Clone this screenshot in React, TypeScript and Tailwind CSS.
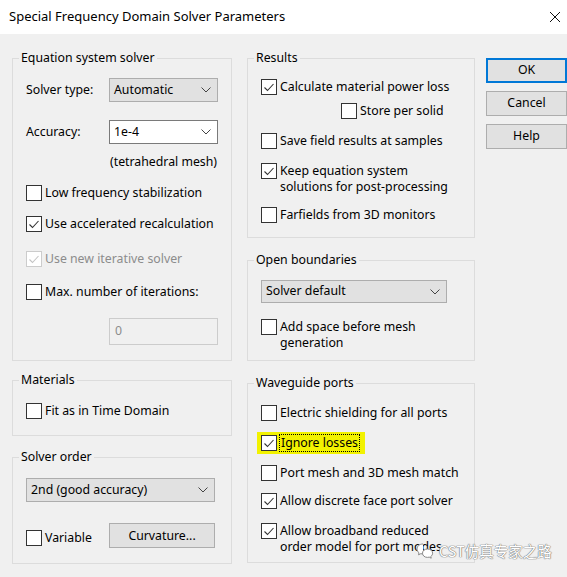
import React from "react";

const font = { fontFamily: '"Noto Sans", "Liberation Sans", sans-serif' };

function Check({ checked, disabled }: { checked?: boolean; disabled?: boolean }) {
  return (
    <span
      className={
        "w-4 h-4 shrink-0 border bg-white flex items-center justify-center " +
        (disabled ? "border-[#cccccc]" : "border-[#333333]")
      }
    >
      {checked && (
        <svg width="14" height="14" viewBox="0 0 14 14">
          <path
            d="M2.5 7.5 L5.5 10.5 L11.5 4"
            fill="none"
            stroke={disabled ? "#c4c4c4" : "#333333"}
            strokeWidth="1.1"
          />
        </svg>
      )}
    </span>
  );
}

function CB({
  label,
  checked,
  disabled,
  className = "",
}: {
  label: React.ReactNode;
  checked?: boolean;
  disabled?: boolean;
  className?: string;
}) {
  return (
    <div className={"flex items-start gap-[3px] leading-4 whitespace-nowrap " + className}>
      <Check checked={checked} disabled={disabled} />
      <span className={disabled ? "text-[#8c8c8c]" : "text-black"}>{label}</span>
    </div>
  );
}

function Chevron() {
  return (
    <svg width="10" height="6" viewBox="0 0 10 6" className="shrink-0">
      <path d="M0.5 0.5 L5 5 L9.5 0.5" fill="none" stroke="#444" strokeWidth="1" />
    </svg>
  );
}

function Select({ value, white, className = "" }: { value: string; white?: boolean; className?: string }) {
  return (
    <div
      className={
        "flex items-center justify-between pl-[4px] pr-[6px] border whitespace-nowrap " +
        (white ? "bg-white border-[#7a7a7a]" : "bg-[#e1e1e1] border-[#adadad]") +
        " " +
        className
      }
    >
      <span>{value}</span>
      <Chevron />
    </div>
  );
}

function Group({
  title,
  children,
  className = "",
  inner = "",
}: {
  title: string;
  children: React.ReactNode;
  className?: string;
  inner?: string;
}) {
  return (
    <fieldset className={"border border-[#dcdcdc] p-0 m-0 min-w-0 " + className}>
      <legend className="ml-[6px] px-[2px] leading-[18px] whitespace-nowrap">{title}</legend>
      <div className={"flex flex-col " + inner}>{children}</div>
    </fieldset>
  );
}

export default function App() {
  return (
    <div className="w-[567px] h-[577px] flex flex-col bg-[#f0f0f0] text-[12.3px] text-black overflow-hidden relative" style={font}>
      <div className="h-[34px] bg-white flex items-center justify-between pl-[9px] pr-[6px] shrink-0">
        <span className="text-[13px]">Special Frequency Domain Solver Parameters</span>
        <svg width="12" height="12" viewBox="0 0 12 12">
          <path d="M1 1 L11 11 M11 1 L1 11" stroke="#111" strokeWidth="1" />
        </svg>
      </div>
      <div className="flex pt-[15px] pl-[12px]">
        {/* left column */}
        <div className="w-[220px] flex flex-col">
          <Group title="Equation system solver" inner="pl-[13px] pr-[13px] pt-[11px] pb-[15px]">
            <div className="flex items-center h-6 whitespace-nowrap">
              <span className="w-[83px]">Solver type:</span>
              <Select value="Automatic" className="w-[109px] h-6" />
            </div>
            <div className="flex items-center h-6 mt-[18px] whitespace-nowrap">
              <span className="w-[83px]">Accuracy:</span>
              <Select value="1e-4" white className="w-[109px] h-6" />
            </div>
            <div className="leading-4 mt-[10px] pl-[84px] whitespace-nowrap">(tetrahedral mesh)</div>
            <CB label="Low frequency stabilization" className="mt-[15px]" />
            <CB label="Use accelerated recalculation" checked className="mt-[15px]" />
            <CB label="Use new iterative solver" checked disabled className="mt-[19px]" />
            <CB label="Max. number of iterations:" className="mt-[17px]" />
            <div className="mt-[18px] ml-[83px] w-[109px] h-[27px] border border-[#cccccc] bg-[#f0f0f0] flex items-center pl-[5px] text-[#8c8c8c]">
              0
            </div>
          </Group>
          <Group title="Materials" className="mt-[10px]" inner="pl-[13px] pt-[14px] pb-[16px]">
            <CB label="Fit as in Time Domain" />
          </Group>
          <Group title="Solver order" className="mt-[12px]" inner="pl-[13px] pr-[16px] pt-[12px] pb-[15px]">
            <Select value="2nd (good accuracy)" className="h-6" />
            <div className="flex items-start mt-[21px]">
              <CB label="Variable" className="mt-[7px] w-[84px]" />
              <button className="w-[107px] h-[25px] bg-[#e1e1e1] border border-[#adadad] leading-4">
                Curvature...
              </button>
            </div>
          </Group>
        </div>
        {/* middle column */}
        <div className="w-[228px] ml-[15px] flex flex-col">
          <Group title="Results" inner="pl-[13px] pt-[12px] pb-[14px]">
            <CB label="Calculate material power loss" checked />
            <CB label="Store per solid" className="mt-[8px] ml-[80px]" />
            <CB label="Save field results at samples" className="mt-[14px]" />
            <CB
              label={
                <>
                  Keep equation system
                  <br />
                  solutions for post-processing
                </>
              }
              checked
              className="mt-[14px]"
            />
            <CB label="Farfields from 3D monitors" className="mt-[12px]" />
          </Group>
          <Group title="Open boundaries" className="mt-[13px]" inner="pl-[13px] pr-[27px] pt-[11px] pb-[9px]">
            <Select value="Solver default" className="h-[23px]" />
            <CB
              label={
                <>
                  Add space before mesh
                  <br />
                  generation
                </>
              }
              className="mt-[16px]"
            />
          </Group>
          <Group title="Waveguide ports" className="mt-[13px]" inner="pl-[13px] pt-[13px] pb-[7px]">
            <CB label="Electric shielding for all ports" />
            <div className="mt-[11px] mb-[-3px] -ml-[4px] py-[3px] pl-[4px] pr-[6px] self-start bg-[#f2f200] flex items-start gap-[3px] leading-4 whitespace-nowrap">
              <Check checked />
              <span className="outline-1 outline-dotted outline-black px-[1px]">Ignore losses</span>
            </div>
            <CB label="Port mesh and 3D mesh match" className="mt-[14px]" />
            <CB label="Allow discrete face port solver" checked className="mt-[12px]" />
            <CB
              label={
                <>
                  Allow broadband reduced
                  <br />
                  order model for port modes
                </>
              }
              checked
              className="mt-[14px]"
            />
          </Group>
        </div>
        {/* buttons */}
        <div className="w-[81px] ml-[11px] mt-[9px] flex flex-col gap-[8px]">
          <button className="h-[25px] bg-[#e1e1e1] border-2 border-[#0078d7]">OK</button>
          <button className="h-[25px] bg-[#e1e1e1] border border-[#adadad]">Cancel</button>
          <button className="h-[25px] bg-[#e1e1e1] border border-[#adadad]">Help</button>
        </div>
      </div>
      {/* watermark */}
      <div className="absolute left-[416px] top-[540px] flex items-center gap-[5px] text-white text-[14.5px] whitespace-nowrap [text-shadow:0_0_1px_#777,0_0_1px_#777,0_0_1px_#777]" style={{ fontFamily: '"Noto Sans CJK SC", "Noto Sans", sans-serif' }}>
        <svg width="18" height="18" viewBox="0 0 18 18">
          <path d="M7 2 C3.5 2 1 4.2 1 7 C1 8.6 1.8 9.9 3 10.8 L2.5 12.8 L4.8 11.7 C5.5 11.9 6.2 12 7 12" fill="white" stroke="#888" strokeWidth="1" />
          <path d="M11.5 7 C8.5 7 6.5 8.9 6.5 11.2 C6.5 13.5 8.5 15.4 11.5 15.4 C12.1 15.4 12.7 15.3 13.2 15.1 L15.2 16.2 L14.8 14.4 C16 13.6 16.6 12.5 16.6 11.2 C16.6 8.9 14.5 7 11.5 7 Z" fill="white" stroke="#888" strokeWidth="1" />
        </svg>
        <span>CST仿真专家之路</span>
      </div>
    </div>
  );
}
